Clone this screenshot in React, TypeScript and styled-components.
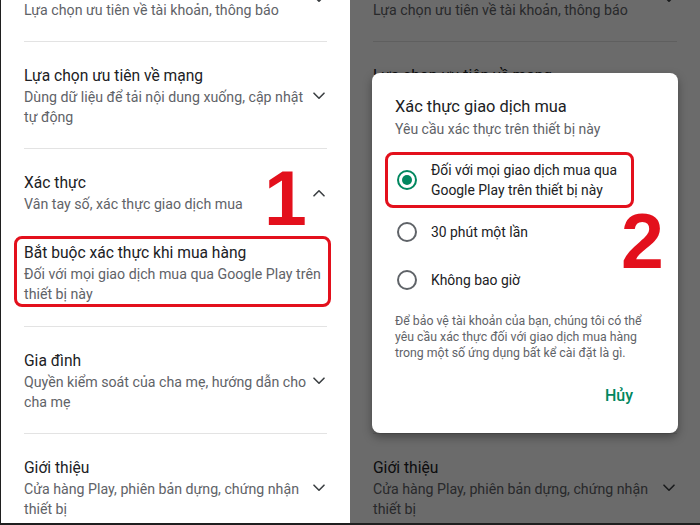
import React from "react";
import styled, { createGlobalStyle } from "styled-components";

const RED = "#e3101c";
const GREEN = "#01875f";

type Child = { title: string; subtitle: string };
type Setting = {
  id: string;
  title: string;
  subtitle: string;
  expanded?: boolean;
  child?: Child;
};

const settings: Setting[] = [
  { id: "general", title: "Chung", subtitle: "Lựa chọn ưu tiên về tài khoản, thông báo" },
  {
    id: "network",
    title: "Lựa chọn ưu tiên về mạng",
    subtitle: "Dùng dữ liệu để tải nội dung xuống, cập nhật tự động",
  },
  {
    id: "auth",
    title: "Xác thực",
    subtitle: "Vân tay số, xác thực giao dịch mua",
    expanded: true,
    child: {
      title: "Bắt buộc xác thực khi mua hàng",
      subtitle: "Đối với mọi giao dịch mua qua Google Play trên thiết bị này",
    },
  },
  {
    id: "family",
    title: "Gia đình",
    subtitle: "Quyền kiểm soát của cha mẹ, hướng dẫn cho cha mẹ",
  },
  {
    id: "about",
    title: "Giới thiệu",
    subtitle: "Cửa hàng Play, phiên bản dựng, chứng nhận thiết bị",
  },
];

const options = [
  { id: "always", label: "Đối với mọi giao dịch mua qua\nGoogle Play trên thiết bị này" },
  { id: "30min", label: "30 phút một lần" },
  { id: "never", label: "Không bao giờ" },
];

const Chevron = ({ up }: { up?: boolean }) => (
  <ChevronSvg width="12" height="8" viewBox="0 0 12 8">
    <polyline
      points={up ? "1,6.8 6,1.8 11,6.8" : "1,1.2 6,6.2 11,1.2"}
      fill="none"
      stroke="currentColor"
      strokeWidth="1.6"
      strokeLinecap="round"
      strokeLinejoin="round"
    />
  </ChevronSvg>
);

const SettingsList = ({ annotated }: { annotated?: boolean }) => (
  <List>
    {settings.map((s, i) => (
      <React.Fragment key={s.id}>
        {i > 0 && <Divider />}
        <Item>
          <Header>
            <Texts>
              <Title>{s.title}</Title>
              <Subtitle>{s.subtitle}</Subtitle>
            </Texts>
            <Chevron up={s.expanded} />
          </Header>
          {s.child && (
            <ChildBox $highlight={annotated}>
              <Title>{s.child.title}</Title>
              <Subtitle>{s.child.subtitle}</Subtitle>
            </ChildBox>
          )}
        </Item>
      </React.Fragment>
    ))}
  </List>
);

const App = () => {
  return (
    <>
      <GlobalStyle />
      <Frame>
        <Panel $width={349}>
          <SettingsList annotated />
          <Marker style={{ left: 263, top: 160 }}>1</Marker>
        </Panel>
        <Panel $width={350}>
          <SettingsList />
          <Scrim />
          <Dialog>
            <DialogTitle>Xác thực giao dịch mua</DialogTitle>
            <DialogSub>Yêu cầu xác thực trên thiết bị này</DialogSub>
            <Options>
              {options.map((o, i) => (
                <OptionRow key={o.id} $highlight={i === 0}>
                  <Radio $checked={i === 0} />
                  <OptionLabel>{o.label}</OptionLabel>
                </OptionRow>
              ))}
            </Options>
            <Note>
              Để bảo vệ tài khoản của bạn, chúng tôi có thể yêu cầu xác thực đối
              với giao dịch mua hàng trong một số ứng dụng bất kể cài đặt là gì.
            </Note>
            <Actions>
              <TextButton>Hủy</TextButton>
            </Actions>
          </Dialog>
          <Marker style={{ left: 271, top: 203 }}>2</Marker>
        </Panel>
      </Frame>
    </>
  );
};

export default App;

const GlobalStyle = createGlobalStyle`
  html, body {
    margin: 0;
    padding: 0;
    background: #fff;
  }
  body {
    font-family: Roboto, "Noto Sans", "Liberation Sans", sans-serif;
  }
  * {
    box-sizing: border-box;
  }
`;

const Frame = styled.div`
  display: flex;
  width: 700px;
  height: 525px;
  overflow: hidden;
  border-left: 1px solid #1f1f1f;
  border-bottom: 2px solid #1f1f1f;
`;

const Panel = styled.div<{ $width: number }>`
  position: relative;
  width: ${(p) => p.$width}px;
  flex-shrink: 0;
  overflow: hidden;
  background: #fff;
`;

const List = styled.div`
  margin-top: -45px;
`;

const Item = styled.div`
  padding: 23px 23px 21px;
`;

const Divider = styled.div`
  height: 1px;
  margin: 0 23px;
  background: #e3e3e3;
`;

const Header = styled.div`
  display: flex;
  align-items: center;
  gap: 4px;
`;

const Texts = styled.div`
  flex: 1;
  min-width: 0;
`;

const Title = styled.div`
  font-size: 15.6px;
  line-height: 22px;
  color: #202124;
`;

const Subtitle = styled.div`
  font-size: 14.2px;
  line-height: 20px;
  color: #5f6368;
`;

const ChevronSvg = styled.svg`
  flex-shrink: 0;
  margin-right: 2px;
  color: #3c4043;
`;

const ChildBox = styled.div<{ $highlight?: boolean }>`
  margin: 22px -4px -2px -10px;
  padding: 3px 0 0 7px;
  border: 3px solid ${(p) => (p.$highlight ? RED : "transparent")};
  border-radius: 8px;
`;

const Marker = styled.span`
  position: absolute;
  z-index: 3;
  font-family: "Liberation Sans", Arial, sans-serif;
  font-weight: 700;
  font-size: 77px;
  line-height: 1;
  color: ${RED};
`;

const Scrim = styled.div`
  position: absolute;
  inset: 0;
  background: rgba(0, 0, 0, 0.58);
`;

const Dialog = styled.div`
  position: absolute;
  z-index: 2;
  left: 22px;
  top: 73px;
  width: 306px;
  padding-top: 22px;
  background: #fff;
  border-radius: 8px;
  box-shadow: 0 4px 10px rgba(0, 0, 0, 0.35);
`;

const DialogTitle = styled.div`
  padding: 0 23px;
  font-size: 16.4px;
  line-height: 24px;
  color: #202124;
`;

const DialogSub = styled.div`
  padding: 0 23px;
  font-size: 14px;
  line-height: 20px;
  color: #5f6368;
`;

const Options = styled.div`
  display: flex;
  flex-direction: column;
  margin: 13px 13px 0;
`;

const OptionRow = styled.div<{ $highlight?: boolean }>`
  display: flex;
  align-items: center;
  gap: 14px;
  width: fit-content;
  min-height: 48px;
  padding: 5px 14px 5px 9px;
  border: 3px solid ${(p) => (p.$highlight ? RED : "transparent")};
  border-radius: 8px;
`;

const Radio = styled.span<{ $checked?: boolean }>`
  display: grid;
  place-items: center;
  flex-shrink: 0;
  width: 20px;
  height: 20px;
  border-radius: 50%;
  border: 2px solid ${(p) => (p.$checked ? GREEN : "#5f6368")};

  &::after {
    content: "";
    width: 10px;
    height: 10px;
    border-radius: 50%;
    background: ${(p) => (p.$checked ? GREEN : "transparent")};
  }
`;

const OptionLabel = styled.span`
  font-size: 13.9px;
  line-height: 20px;
  color: #202124;
  white-space: pre-line;
`;

const Note = styled.p`
  margin: 9px 23px 0;
  font-size: 12.3px;
  line-height: 16px;
  color: #5f6368;
`;

const Actions = styled.div`
  display: flex;
  justify-content: flex-end;
  margin-top: 16px;
  padding: 0 37px 20px;
`;

const TextButton = styled.button`
  height: 36px;
  padding: 0 8px;
  border: none;
  background: none;
  font-family: inherit;
  font-size: 16px;
  font-weight: 500;
  color: ${GREEN};
`;
